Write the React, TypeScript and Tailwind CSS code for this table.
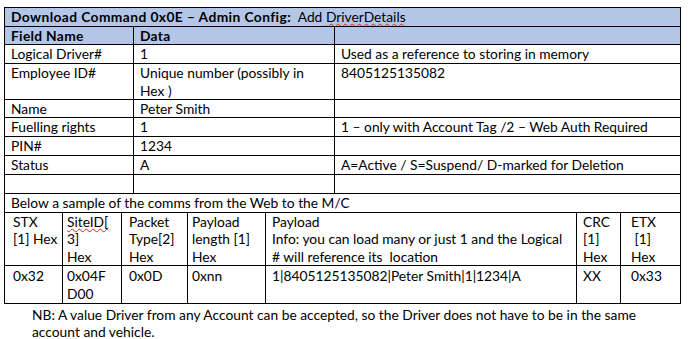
import React from "react";

const Sq = ({ children }: { children: React.ReactNode }) => (
  <span className="underline decoration-wavy decoration-[#e02020] decoration-1 underline-offset-[1px] [text-decoration-skip-ink:none]">
    {children}
  </span>
);

export default function App() {
  const c = "border-r border-b border-black px-[6px] whitespace-nowrap overflow-hidden";
  const r1 = "leading-[18px] h-[19px]";
  return (
    <div className="w-[688px] h-[339px] bg-white text-black [font-family:Lato,sans-serif] text-[13.8px] pt-[7px] pl-[4px] overflow-hidden">
      <div className="w-[677px] border-l border-t border-black">
        <div className={`${c} ${r1} bg-[#b4c6e7]`}>
          <span className="font-bold tracking-[0.4px]">Download Command 0x0E – Admin Config:</span>
          {"\u00a0 Add "}
          <Sq>DriverDetails</Sq>
        </div>
        <div className="grid grid-cols-[129px_201px_346px]">
          <div className={`${c} h-[18px] leading-[17px] bg-[#b4c6e7] font-bold tracking-[0.3px]`}>Field Name</div>
          <div className={`${c} h-[18px] leading-[17px] bg-[#b4c6e7] font-bold tracking-[0.3px]`}>Data</div>
          <div className={`${c} h-[18px] leading-[17px] bg-[#b4c6e7]`}></div>

          <div className={`${c} ${r1}`}>Logical Driver#</div>
          <div className={`${c} ${r1}`}>1</div>
          <div className={`${c} ${r1}`}>Used as a reference to storing in memory</div>

          <div className={`${c} h-[36px] leading-[17.5px]`}>Employee ID#</div>
          <div className={`${c} h-[36px] leading-[17.5px]`}>
            Unique number (possibly in
            <br />
            Hex )
          </div>
          <div className={`${c} h-[36px] leading-[17.5px]`}>8405125135082</div>

          <div className={`${c} h-[18px] leading-[17px]`}>Name</div>
          <div className={`${c} h-[18px] leading-[17px]`}>Peter Smith</div>
          <div className={`${c} h-[18px] leading-[17px]`}></div>

          <div className={`${c} ${r1}`}>Fuelling rights</div>
          <div className={`${c} ${r1}`}>1</div>
          <div className={`${c} ${r1}`}>1 – only with Account Tag /2 – Web Auth Required</div>

          <div className={`${c} ${r1}`}>PIN#</div>
          <div className={`${c} ${r1}`}>1234</div>
          <div className={`${c} ${r1}`}></div>

          <div className={`${c} ${r1}`}>Status</div>
          <div className={`${c} ${r1}`}>A</div>
          <div className={`${c} ${r1}`}>A=Active / S=Suspend/ D-marked for Deletion</div>

          <div className={`${c} ${r1}`}></div>
          <div className={`${c} ${r1}`}></div>
          <div className={`${c} ${r1}`}></div>
        </div>
        <div className={`${c} ${r1}`}>Below a sample of the comms from the Web to the M/C</div>
        <div className="grid grid-cols-[58px_59px_66px_78px_311px_44px_60px]">
          <div className={`${c} h-[53px] leading-[17.3px] pl-[8px]`}>
            STX
            <br />
            [1] Hex
          </div>
          <div className={`${c} h-[53px] leading-[17.3px] pl-[4px]`}>
            <Sq>SiteID[</Sq>
            <br />
            3]
            <br />
            Hex
          </div>
          <div className={`${c} h-[53px] leading-[17.3px] pl-[7px]`}>
            Packet
            <br />
            Type[2]
            <br />
            Hex
          </div>
          <div className={`${c} h-[53px] leading-[17.3px] pl-[4px]`}>
            Payload
            <br />
            length [1]
            <br />
            Hex
          </div>
          <div className={`${c} h-[53px] leading-[17.3px]`}>
            Payload
            <br />
            Info: you can load many or just 1 and the Logical
            <br /># will reference its&nbsp; location
          </div>
          <div className={`${c} h-[53px] leading-[17.3px]`}>
            CRC
            <br />
            [1]
            <br />
            Hex
          </div>
          <div className={`${c} h-[53px] leading-[17.3px] pl-[10px]`}>
            ETX
            <br />
            &nbsp;[1]
            <br />
            Hex
          </div>

          <div className={`${c} h-[38px] leading-[17.5px] pt-[1px] pl-[8px]`}>0x32</div>
          <div className={`${c} h-[38px] leading-[17.5px] pt-[1px] pl-[4px]`}>
            0x04F
            <br />
            D00
          </div>
          <div className={`${c} h-[38px] leading-[17.5px] pt-[1px] pl-[7px]`}>0x0D</div>
          <div className={`${c} h-[38px] leading-[17.5px] pt-[1px] pl-[4px]`}>0xnn</div>
          <div className={`${c} h-[38px] leading-[17.5px] pt-[1px]`}>1|8405125135082|Peter Smith|1|1234|A</div>
          <div className={`${c} h-[38px] leading-[17.5px] pt-[1px]`}>XX</div>
          <div className={`${c} h-[38px] leading-[17.5px] pt-[1px] pl-[10px]`}>0x33</div>
        </div>
      </div>
      <p className="pl-[28px] pt-[3px] leading-[16.5px] whitespace-nowrap">
        NB: A value Driver from any Account can be accepted, so the Driver does not have to be in the same
        <br />
        account and vehicle.
      </p>
    </div>
  );
}
